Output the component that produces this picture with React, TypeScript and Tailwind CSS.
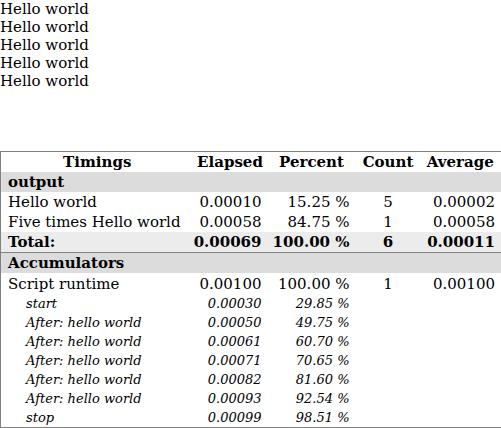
const rows = [
  { label: 'Hello world', elapsed: '0.00010', percent: '15.25 %', count: '5', avg: '0.00002' },
  { label: 'Five times Hello world', elapsed: '0.00058', percent: '84.75 %', count: '1', avg: '0.00058' },
]

const marks = [
  { label: 'start', elapsed: '0.00030', percent: '29.85 %' },
  { label: 'After: hello world', elapsed: '0.00050', percent: '49.75 %' },
  { label: 'After: hello world', elapsed: '0.00061', percent: '60.70 %' },
  { label: 'After: hello world', elapsed: '0.00071', percent: '70.65 %' },
  { label: 'After: hello world', elapsed: '0.00082', percent: '81.60 %' },
  { label: 'After: hello world', elapsed: '0.00093', percent: '92.54 %' },
  { label: 'stop', elapsed: '0.00099', percent: '98.51 %' },
]

export default function App() {
  return (
    <div className="[font-family:'DejaVu_Serif',serif] text-[15px] text-black bg-white w-[501px] h-[428px] overflow-hidden">
      <div className="leading-[18px]">
        {Array.from({ length: 5 }).map((_, i) => (
          <div key={i}>Hello world</div>
        ))}
      </div>

      <table className="[font-family:'DejaVu_Serif',serif] text-[15px] mt-[61px] w-[501px] table-fixed border-collapse border border-[#808080] leading-[20px]">
        <colgroup>
          <col className="w-[193px]" />
          <col className="w-[73px]" />
          <col className="w-[90px]" />
          <col className="w-[63px]" />
          <col className="w-[82px]" />
        </colgroup>
        <thead>
          <tr className="h-5 font-bold">
            <th className="p-0 text-center">Timings</th>
            <th className="p-0 text-center">Elapsed</th>
            <th className="p-0 text-center">Percent</th>
            <th className="p-0 text-center">Count</th>
            <th className="p-0 text-center">Average</th>
          </tr>
        </thead>
        <tbody>
          <tr className="h-5 bg-[#dcdcdc]">
            <td colSpan={5} className="px-[7px] font-bold">output</td>
          </tr>
          {rows.map((r) => (
            <tr key={r.label} className="h-5">
              <td className="px-[7px] whitespace-nowrap">{r.label}</td>
              <td className="pr-[5px] text-right">{r.elapsed}</td>
              <td className="pr-[7px] text-right">{r.percent}</td>
              <td className="text-center">{r.count}</td>
              <td className="pr-[6px] text-right">{r.avg}</td>
            </tr>
          ))}
          <tr className="h-5 bg-[#ececec] font-bold border-b border-[#808080]">
            <td className="px-[7px]">Total:</td>
            <td className="pr-[5px] text-right">0.00069</td>
            <td className="pr-[7px] text-right">100.00 %</td>
            <td className="text-center">6</td>
            <td className="pr-[6px] text-right">0.00011</td>
          </tr>
          <tr className="h-5 bg-[#dcdcdc]">
            <td colSpan={5} className="px-[7px] font-bold">Accumulators</td>
          </tr>
          <tr className="h-[21px]">
            <td className="px-[7px]">Script runtime</td>
            <td className="pr-[5px] text-right">0.00100</td>
            <td className="pr-[7px] text-right">100.00 %</td>
            <td className="text-center">1</td>
            <td className="pr-[6px] text-right">0.00100</td>
          </tr>
          {marks.map((m, i) => (
            <tr key={i} className="h-[19px] italic text-[13px] leading-[19px]">
              <td className="pl-[25px]">{m.label}</td>
              <td className="pr-[5px] text-right">{m.elapsed}</td>
              <td className="pr-[7px] text-right">{m.percent}</td>
              <td></td>
              <td></td>
            </tr>
          ))}
        </tbody>
      </table>
    </div>
  )
}
